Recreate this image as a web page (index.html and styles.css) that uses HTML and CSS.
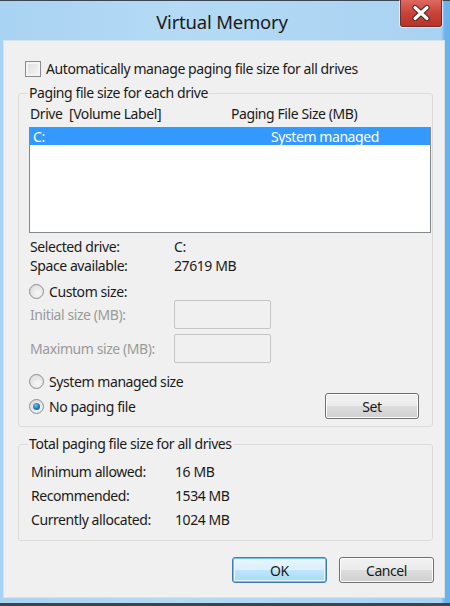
FILE: index.html
```html
<!DOCTYPE html>
<html>
<head>
<meta charset="utf-8">
<title>Virtual Memory</title>
<link rel="stylesheet" href="styles.css">
</head>
<body>
<div class="window">
  <div class="titlebar">
    <span class="title">Virtual Memory</span>
    <button class="close" aria-label="Close">
      <svg width="20" height="16" viewBox="0 0 20 16">
        <path d="M4 2.5 L16 13.5 M16 2.5 L4 13.5" stroke="#4a2320" stroke-width="5.2" stroke-linecap="round" fill="none"/>
        <path d="M4 2.5 L16 13.5 M16 2.5 L4 13.5" stroke="#ffffff" stroke-width="3.2" stroke-linecap="round" fill="none"/>
      </svg>
    </button>
  </div>
  <div class="client">
    <div class="check-row"><span class="checkbox"></span><span>Automatically manage paging file size for all drives</span></div>

    <fieldset class="group group-drives">
      <legend>Paging file size for each drive</legend>
      <div class="list-head"><span class="col-drive">Drive&nbsp;&nbsp;[Volume Label]</span><span class="col-size">Paging File Size (MB)</span></div>
      <div class="listbox">
        <div class="list-row selected"><span class="col-drive">C:</span><span class="col-size">System managed</span></div>
      </div>
      <div class="info">
        <div class="info-row"><span class="info-label">Selected drive:</span><span>C:</span></div>
        <div class="info-row"><span class="info-label">Space available:</span><span>27619 MB</span></div>
      </div>
      <div class="radio-row custom-row"><span class="radio"></span><span>Custom size:</span></div>
      <div class="field-row"><span class="info-label">Initial size (MB):</span><span class="input"></span></div>
      <div class="field-row field-row-2"><span class="info-label">Maximum size (MB):</span><span class="input"></span></div>
      <div class="radio-row system-row"><span class="radio"></span><span>System managed size</span></div>
      <div class="radio-row set-row"><span class="radio checked"></span><span class="grow">No paging file</span><button class="btn btn-set">Set</button></div>
    </fieldset>

    <fieldset class="group group-total">
      <legend>Total paging file size for all drives</legend>
      <div class="total-row"><span class="info-label">Minimum allowed:</span><span>16 MB</span></div>
      <div class="total-row"><span class="info-label">Recommended:</span><span>1534 MB</span></div>
      <div class="total-row"><span class="info-label">Currently allocated:</span><span>1024 MB</span></div>
    </fieldset>

    <div class="buttons">
      <button class="btn btn-ok">OK</button>
      <button class="btn">Cancel</button>
    </div>
  </div>
</div>
</body>
</html>
```

FILE: styles.css
```css
* { box-sizing: border-box; }
html, body { margin: 0; padding: 0; }
body {
  width: 450px;
  height: 606px;
  overflow: hidden;
  font-family: "Noto Sans", "Open Sans", sans-serif;
  font-size: 14px;
  letter-spacing: -0.42px;
  color: #1a1a1a;
  background: #3a4550;
}
.window {
  width: 450px;
  height: 606px;
  border-top: 1px solid #3b4650;
  border-bottom: 3px solid #3a4550;
  background: linear-gradient(90deg, #a9d3f2 0%, #b4daf5 40%, #a9d3f2 98%, #6cb2ea 98.9%, #6cb2ea 100%);
  padding: 0 5px 5px 3px;
  display: flex;
  flex-direction: column;
  position: relative;
}
.titlebar {
  height: 39px;
  display: flex;
  align-items: center;
  justify-content: center;
  position: relative;
}
.title {
  font-size: 18.5px;
  letter-spacing: -0.2px;
  color: #1a1a1a;
  margin-left: -4px;
  margin-top: 1px;
}
.close {
  position: absolute;
  top: -1px;
  right: 3px;
  width: 42px;
  height: 27px;
  border: 1px solid #7a2a22;
  border-top: none;
  border-radius: 0 0 3px 3px;
  background: linear-gradient(#de6a60, #c8443a 50%, #b83328);
  box-shadow: 0 0 0 1px rgba(255,255,255,0.55);
  display: flex;
  align-items: center;
  justify-content: center;
  padding: 0;
}
.client {
  flex: 1;
  background: #f0f0f0;
  border: 1px solid #d2e3f0;
  padding: 19px 11px 14px 14px;
  display: flex;
  flex-direction: column;
}
.check-row {
  display: flex;
  align-items: center;
  height: 17px;
  margin-left: 7px;
}
.checkbox {
  width: 16px;
  height: 16px;
  border: 1px solid #8a8a8a;
  background: linear-gradient(135deg, #dcdcdc, #f6f6f6);
  box-shadow: inset 0 0 0 2px #f4f4f4;
  margin-right: 5px;
}
.group {
  margin: 0;
  border: 1px solid #dcdcdc;
  border-radius: 3px;
  padding: 3px 13px 7px 10px;
  min-width: 0;
}
.group legend {
  padding: 0 1px;
  line-height: 18px;
  margin-left: -1px;
}
.group-drives { margin-top: 7px; }
.list-head, .list-row {
  display: flex;
  line-height: 18px;
}
.list-head { padding-left: 1px; }
.col-drive { width: 201px; }
.listbox {
  margin-top: 4px;
  margin-right: -12px;
  height: 106px;
  border: 1px solid #828790;
  background: #fff;
}
.list-row.selected {
  background: #3399ff;
  color: #fff;
  height: 17px;
  line-height: 17px;
  padding-left: 3px;
}
.list-row.selected .col-size { margin-left: 37px; }
.info { margin-top: 4px; }
.info-row {
  display: flex;
  line-height: 19px;
  padding-left: 1px;
}
.info-label { width: 144px; }
.radio-row {
  display: flex;
  align-items: center;
}
.radio {
  width: 15px;
  height: 15px;
  border-radius: 50%;
  border: 1px solid #8e8e8e;
  background: radial-gradient(circle at 60% 65%, #f8f8f8 0%, #e0e0e0 70%, #d2d2d2 100%);
  margin-right: 5px;
  flex: none;
  display: flex;
  align-items: center;
  justify-content: center;
}
.radio.checked::after {
  content: "";
  width: 7px;
  height: 7px;
  border-radius: 50%;
  background: radial-gradient(circle at 40% 35%, #6fc4f0 0%, #1d78b8 55%, #0f4f85 100%);
}
.custom-row {
  margin-top: 8px;
  height: 17px;
  line-height: 17px;
}
.field-row {
  display: flex;
  align-items: center;
  height: 29px;
  color: #9a9a9a;
  padding-left: 1px;
}
.field-row-2 { margin-top: 5px; }
.input {
  width: 97px;
  height: 29px;
  border: 1px solid #c4c4c4;
  border-radius: 2px;
  background: #f0f0f0;
}
.system-row {
  margin-top: 9px;
  height: 18px;
}
.set-row {
  margin-top: 3px;
  height: 26px;
}
.grow { flex: 1; }
.btn {
  font-family: inherit;
  font-size: 14px;
  letter-spacing: -0.42px;
  color: #1a1a1a;
  width: 95px;
  height: 26px;
  border: 1px solid #707070;
  border-radius: 3px;
  background: linear-gradient(#f2f2f2 0%, #ebebeb 50%, #dddddd 51%, #cfcfcf 100%);
  box-shadow: inset 0 0 0 1px #fcfcfc;
  padding: 0;
}
.btn-set { width: 94px; }
.group-total {
  margin-top: 8px;
  padding-top: 7px;
  padding-bottom: 8px;
}
.total-row {
  display: flex;
  line-height: 24px;
  padding-left: 2px;
}
.buttons {
  display: flex;
  justify-content: flex-end;
  gap: 12px;
  margin-top: 16px;
  margin-right: -1px;
}
.btn-ok {
  border-color: #3c7fb1;
  background: linear-gradient(#eaf6fd 0%, #d9f0fc 50%, #bee6fd 51%, #a7d9f5 100%);
  box-shadow: inset 0 0 0 1px #67c3f0, inset 0 0 0 2px #e8f5fc;
}
```
